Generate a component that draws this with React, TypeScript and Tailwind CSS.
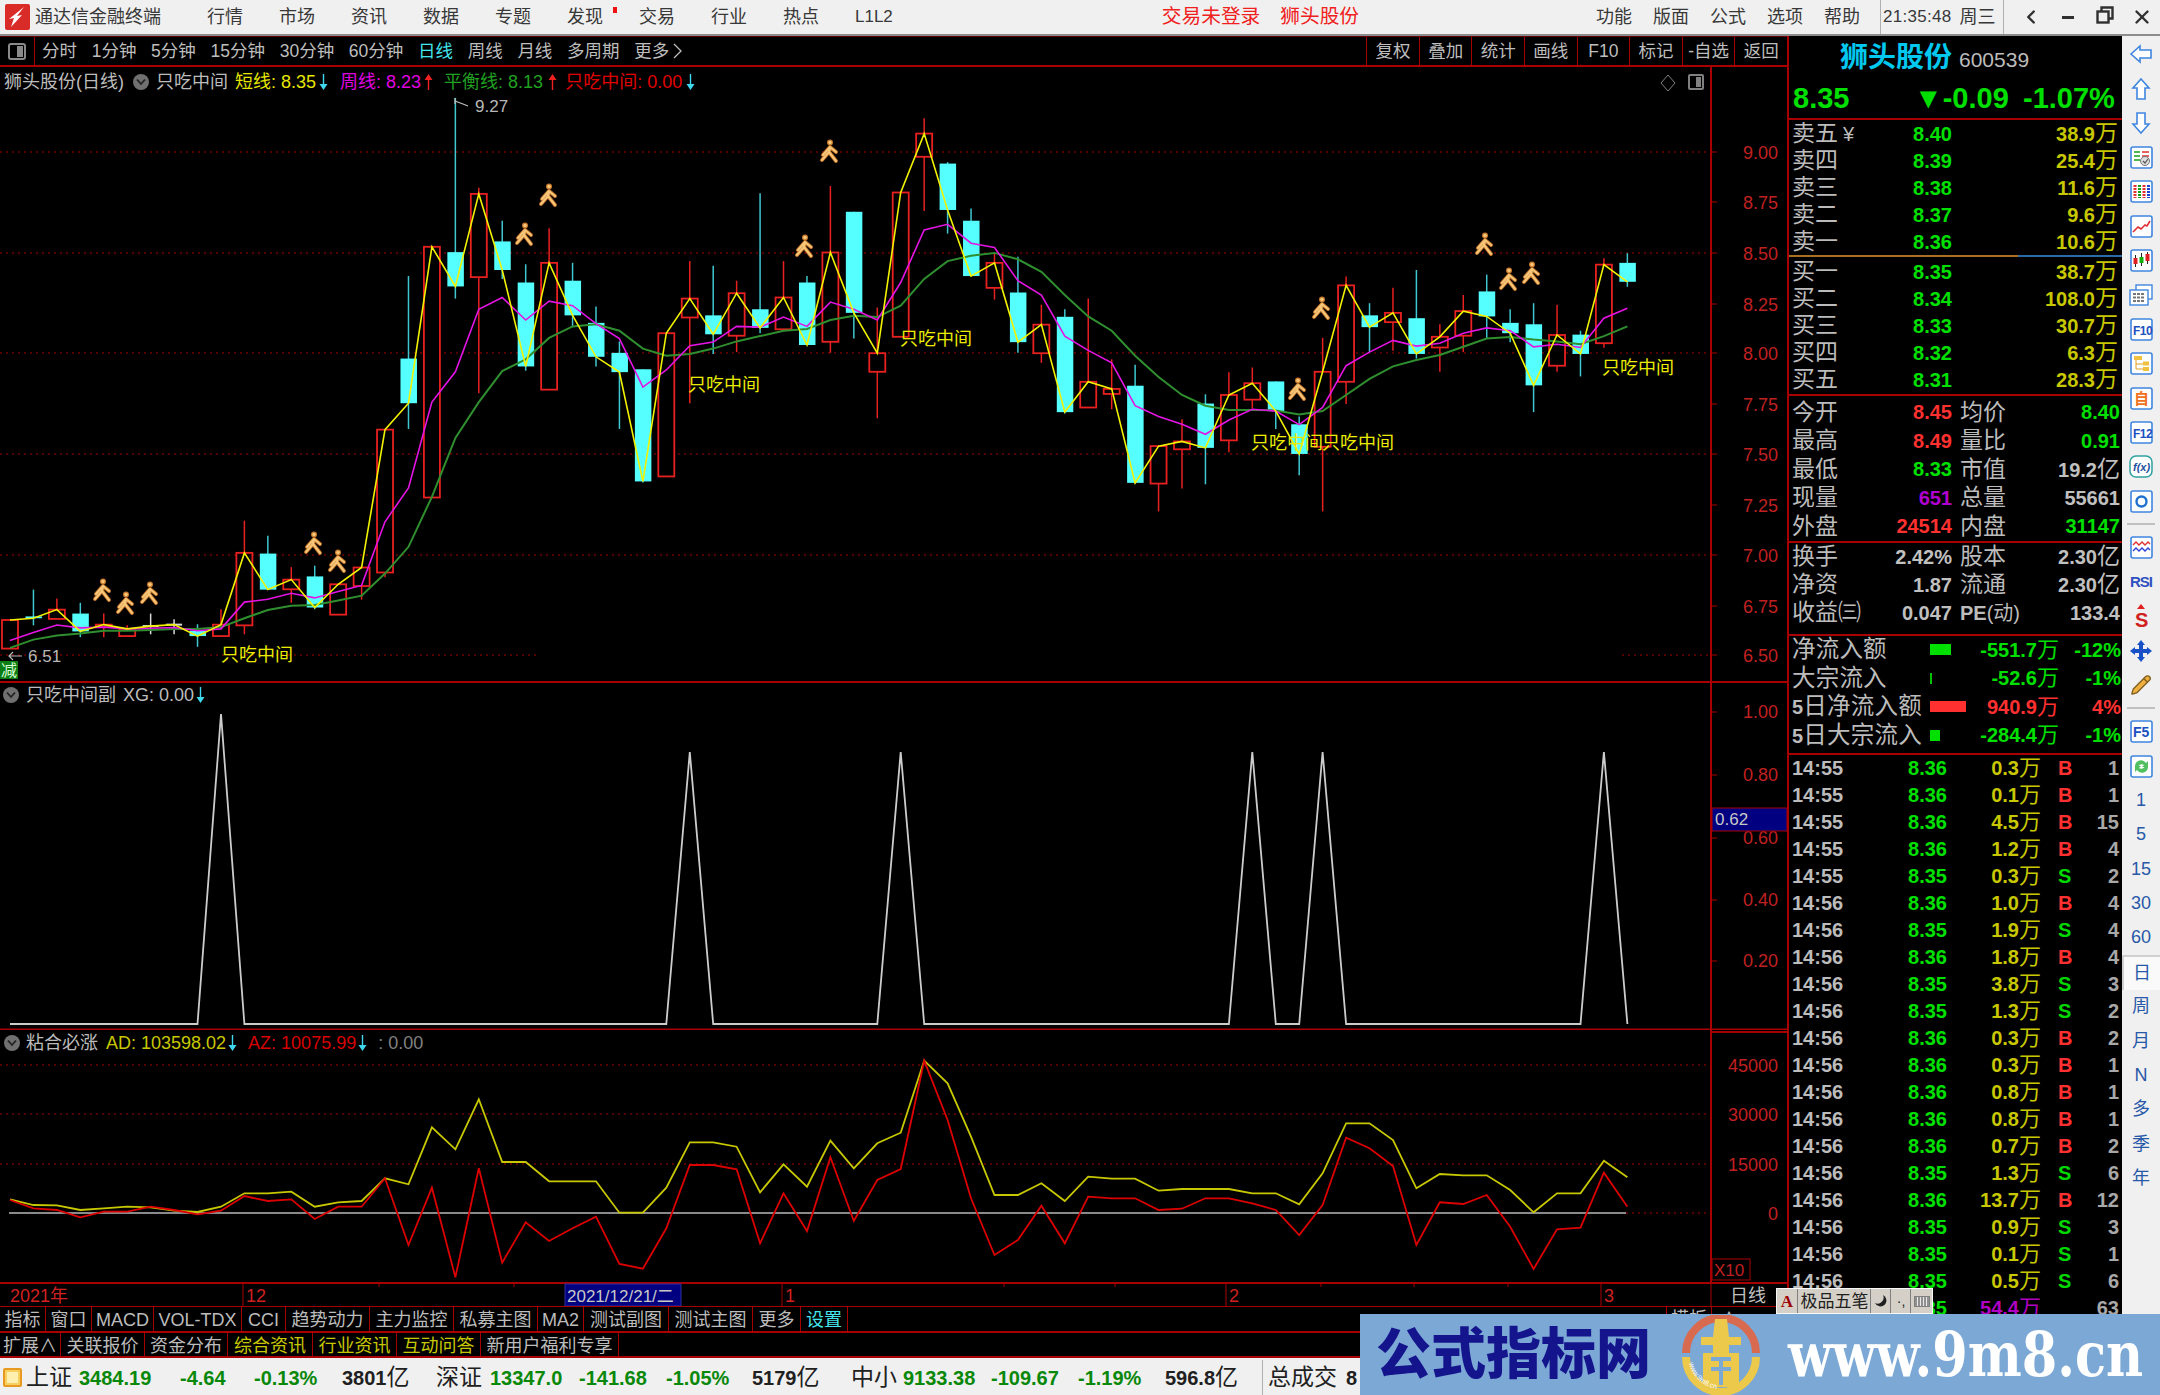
import React from 'react';
import { ChevronLeft, Pencil, X } from 'lucide-react';

// chart data was read in reference zoom coords, zy() maps it back to page pixels
const zy = (d: number) => 120 + d / 2.8;
const cx = (i: number) => 10 + 23.44 * i;

type Candle = [number, number, number, number, 'r' | 'c' | 'w'];

const candles: Candle[] = [
  [1400, 1400, 1480, 1480, 'r'], [1315, 1390, 1395, 1415, 'c'], [1340, 1371, 1397, 1397, 'r'], [1352, 1382, 1432, 1448, 'c'],
  [1382, 1413, 1420, 1448, 'r'], [1415, 1425, 1445, 1445, 'r'], [1382, 1417, 1420, 1440, 'w'], [1398, 1413, 1417, 1440, 'w'],
  [1412, 1430, 1445, 1475, 'c'], [1370, 1413, 1445, 1445, 'r'], [1122, 1212, 1415, 1440, 'r'], [1164, 1214, 1315, 1315, 'c'],
  [1252, 1287, 1314, 1352, 'r'], [1248, 1278, 1365, 1370, 'c'], [1300, 1300, 1385, 1385, 'r'], [1253, 1253, 1305, 1343, 'r'],
  [867, 867, 1267, 1280, 'r'], [437, 668, 793, 865, 'c'], [355, 355, 1057, 1057, 'r'], [-62, 370, 466, 500, 'c'],
  [190, 207, 440, 765, 'r'], [282, 340, 420, 445, 'c'], [404, 455, 690, 702, 'c'], [303, 400, 755, 755, 'r'],
  [400, 450, 547, 580, 'c'], [522, 568, 663, 690, 'c'], [620, 652, 706, 865, 'c'], [698, 698, 1012, 1015, 'c'],
  [597, 597, 998, 998, 'r'], [395, 500, 553, 793, 'r'], [408, 547, 600, 655, 'c'], [450, 485, 604, 650, 'r'],
  [205, 530, 582, 597, 'c'], [395, 497, 586, 586, 'r'], [437, 455, 630, 630, 'c'], [185, 371, 621, 652, 'r'],
  [257, 257, 540, 612, 'c'], [525, 653, 705, 835, 'r'], [203, 203, 607, 607, 'r'], [-5, 38, 103, 255, 'r'],
  [118, 122, 252, 318, 'c'], [248, 282, 437, 437, 'c'], [375, 400, 470, 503, 'r'], [383, 483, 622, 652, 'c'],
  [517, 573, 653, 680, 'r'], [530, 551, 818, 822, 'c'], [500, 733, 805, 805, 'r'], [670, 753, 767, 810, 'r'],
  [685, 744, 1016, 1018, 'c'], [913, 913, 1018, 1096, 'r'], [838, 900, 922, 1032, 'r'], [768, 794, 918, 1020, 'c'],
  [706, 770, 897, 930, 'r'], [693, 737, 783, 808, 'r'], [732, 732, 815, 865, 'c'], [830, 852, 935, 995, 'c'],
  [610, 705, 915, 1096, 'r'], [438, 463, 733, 795, 'r'], [513, 547, 580, 650, 'c'], [470, 540, 566, 646, 'r'],
  [420, 555, 655, 668, 'c'], [572, 607, 637, 705, 'r'], [490, 535, 604, 650, 'r'], [433, 480, 550, 613, 'c'],
  [530, 568, 597, 622, 'c'], [513, 572, 743, 818, 'c'], [517, 602, 688, 705, 'r'], [590, 601, 655, 718, 'c'],
  [387, 405, 625, 638, 'r'], [373, 400, 453, 467, 'c'],
];

const maLine = [
  1457, 1435, 1414, 1422, 1420, 1425, 1423, 1421, 1430, 1425, 1350, 1342, 1325, 1338, 1320, 1303, 1125, 1030, 790, 705,
  530, 497, 560, 507, 520, 570, 612, 748, 700, 632, 622, 578, 580, 552, 578, 510, 530, 560, 455, 308,
  292, 345, 357, 450, 490, 605, 645, 680, 800, 830, 852, 880, 840, 810, 815, 853, 805, 688, 650, 617,
  633, 625, 597, 582, 590, 635, 628, 637, 555, 527,
];

const balanceLine = [
  1478, 1455, 1443, 1438, 1430, 1430, 1428, 1425, 1425, 1420, 1395, 1372, 1360, 1358, 1345, 1332, 1270, 1195, 1055, 890,
  790, 703, 670, 610, 578, 572, 590, 640, 660, 655, 640, 620, 605, 590, 585, 560, 548, 552, 520, 445,
  395, 380, 372, 390, 425, 490, 550, 590, 660, 720, 770, 800, 812, 812, 813, 825, 815, 770, 725, 690,
  672, 658, 635, 612, 608, 615, 620, 628, 605, 578,
];

const adLine = [
  538, 555, 556, 570, 565, 560, 562, 572, 576, 560, 520, 520, 515, 560, 547, 543, 475, 493, 322, 388,
  238, 426, 426, 484, 484, 484, 578, 578, 503, 367, 367, 380, 517, 433, 500, 362, 445, 370, 338, 122,
  190, 350, 525, 525, 490, 543, 470, 476, 476, 512, 507, 507, 507, 520, 520, 553, 460, 310, 310, 360,
  505, 462, 466, 466, 510, 577, 520, 520, 422, 472,
];

const azLine = [
  540, 565, 570, 592, 575, 575, 560, 570, 583, 572, 528, 543, 538, 597, 560, 560, 475, 675, 503, 772,
  445, 728, 607, 663, 625, 590, 732, 746, 625, 435, 435, 448, 670, 520, 633, 412, 603, 480, 447, 122,
  300, 535, 705, 660, 557, 670, 530, 535, 535, 570, 566, 535, 535, 550, 570, 645, 555, 353, 385, 438,
  675, 547, 552, 525, 620, 747, 628, 623, 458, 560,
];

const runners: [number, number][] = [
  [103, 590], [126, 603], [150, 593], [314, 543], [338, 561], [525, 234], [549, 195], [805, 246], [830, 151],
  [1322, 308], [1298, 389], [1485, 244], [1509, 279], [1532, 273],
];

const signals: [number, number][] = [
  [221, 654], [688, 384], [900, 338], [1251, 442], [1322, 442], [1602, 367],
];

const mainGrid = [152, 253, 353, 454, 555];
const mainAxis: [string, number][] = [
  ['9.00', 152], ['8.75', 202], ['8.50', 253], ['8.25', 304], ['8.00', 353], ['7.75', 404],
  ['7.50', 454], ['7.25', 505], ['7.00', 555], ['6.75', 606], ['6.50', 655],
];

const pts = (ys: number[], map: (d: number) => number) => ys.map((d, i) => `${cx(i).toFixed(1)},${map(d).toFixed(1)}`).join(' ');

const runnerPath = 'M0 -4 L-1 1 M0 -4 L6 1 M0 -4 L-7 4 M-1 1 L-8 9 M-1 1 L6 10';

const Runner = ({ x, y }: { x: number; y: number }) => (
  <g transform={`translate(${x} ${y})`} fill="none" strokeLinecap="round" strokeLinejoin="round">
    <circle cx={0} cy={-8.5} r={3} fill="#c87a2c" />
    <path d={runnerPath} stroke="#b86c24" strokeWidth={4} />
    <circle cx={0} cy={-8.5} r={1.8} fill="#f8c678" />
    <path d={runnerPath} stroke="#f8c678" strokeWidth={2.2} />
  </g>
);

const MainChart = () => (
  <svg className="block" width={1787} height={616} viewBox="0 67 1787 616">
    {mainGrid.map((y) => (
      <line key={y} x1={0} x2={1711} y1={y} y2={y} stroke="#a80000" strokeDasharray="2 4" />
    ))}
    <line x1={0} x2={537} y1={655} y2={655} stroke="#a80000" strokeDasharray="2 4" />
    <line x1={1622} x2={1711} y1={655} y2={655} stroke="#a80000" strokeDasharray="2 4" />
    {candles.map(([h, t, b, l, kind], i) => {
      const x = cx(i);
      if (kind === 'w') {
        return (
          <g key={i} stroke="#d8d8d8" strokeWidth={1.5}>
            <line x1={x} x2={x} y1={zy(h)} y2={zy(l)} />
            <line x1={x - 8} x2={x + 8} y1={zy(t)} y2={zy(t)} strokeWidth={2} />
          </g>
        );
      }
      const stroke = kind === 'r' ? '#e82020' : '#3fc8d0';
      return (
        <g key={i}>
          <line x1={x} x2={x} y1={zy(h)} y2={zy(l)} stroke={stroke} strokeWidth={1.5} />
          {kind === 'r' ? (
            <rect x={x - 8} y={zy(t)} width={16} height={zy(b) - zy(t)} fill="#000" stroke={stroke} strokeWidth={1.8} />
          ) : (
            <rect x={x - 8} y={zy(t)} width={16.5} height={zy(b) - zy(t)} fill="#55ffff" />
          )}
        </g>
      );
    })}
    <polyline points={pts(balanceLine, zy)} fill="none" stroke="#2f8f2f" strokeWidth={2} />
    <polyline points={pts(maLine, zy)} fill="none" stroke="#e414e4" strokeWidth={1.6} />
    <polyline points={candles.map((c, i) => `${cx(i).toFixed(1)},${zy(c[4] === 'c' ? c[2] : c[1]).toFixed(1)}`).join(' ')} fill="none" stroke="#f2f200" strokeWidth={1.6} />
    {runners.map(([x, y]) => (
      <Runner key={`${x}-${y}`} x={x} y={y} />
    ))}
    {signals.map(([x, y]) => (
      <text key={x} x={x} y={y + 7} fontSize={18} fill="#ecec00">只吃中间</text>
    ))}
    <path d="M455 98 L455 104 M455 101 L463 104 L468 106" stroke="#c0c0c0" strokeWidth={1.2} fill="none" />
    <text x={475} y={112} fontSize={17} fill="#b8b8b8">9.27</text>
    <path d="M22 656 H9 M13 652 L9 656 L13 660" stroke="#b8b8b8" strokeWidth={1.2} fill="none" />
    <text x={28} y={662} fontSize={17} fill="#b8b8b8">6.51</text>
    <rect x={0} y={661} width={18} height={18} fill="#0b7d12" />
    <text x={1} y={676} fontSize={16} fill="#d8ffd8">减</text>
    <line x1={1711} x2={1711} y1={67} y2={683} stroke="#a80000" strokeWidth={2} />
    {mainAxis.map(([label, y]) => (
      <g key={label}>
        <line x1={1711} x2={1717} y1={y} y2={y} stroke="#a80000" />
        <text x={1778} y={y + 7} fontSize={18} textAnchor="end" fill="#c02020">{label}</text>
      </g>
    ))}
    <line x1={0} x2={1787} y1={682} y2={682} stroke="#a80000" strokeWidth={2} />
  </svg>
);

const peakLine = () => {
  const tall = [9];
  const peaks = [9, 29, 38, 53, 56, 68];
  const out: string[] = [];
  for (let i = 0; i < 70; i++) {
    const base = 1024;
    const y = peaks.includes(i) ? (tall.includes(i) ? 714 : 752) : base;
    out.push(`${cx(i).toFixed(1)},${y}`);
  }
  return out.join(' ');
};

const subAxis: [string, number][] = [['1.00', 712], ['0.80', 775], ['0.60', 838], ['0.40', 900], ['0.20', 961]];

const SignalChart = () => (
  <svg className="block" width={1787} height={347} viewBox="0 683 1787 347">
    <polyline points={peakLine()} fill="none" stroke="#cccccc" strokeWidth={1.8} />
    <line x1={1711} x2={1711} y1={683} y2={1030} stroke="#a80000" strokeWidth={2} />
    {subAxis.map(([label, y]) => (
      <g key={label}>
        <line x1={1711} x2={1717} y1={y} y2={y} stroke="#a80000" />
        <text x={1778} y={y + 6} fontSize={18} textAnchor="end" fill="#c02020">{label}</text>
      </g>
    ))}
    <rect x={1712} y={808} width={75} height={23} fill="#000080" stroke="#a80000" />
    <text x={1715} y={825} fontSize={17} fill="#c8c8c8">0.62</text>
    <line x1={0} x2={1787} y1={1029.5} y2={1029.5} stroke="#a80000" strokeWidth={2} />
  </svg>
);

const flowY = (d: number) => 1020 + d / 3;
const flowAxis: [string, number][] = [['45000', 1065], ['30000', 1114], ['15000', 1164], ['0', 1213]];

const FlowChart = () => (
  <svg className="block" width={1787} height={252} viewBox="0 1030 1787 252">
    {[1065, 1114, 1164].map((y) => (
      <line key={y} x1={0} x2={1711} y1={y} y2={y} stroke="#a80000" strokeDasharray="2 4" />
    ))}
    <line x1={1626} x2={1711} y1={1213} y2={1213} stroke="#a80000" strokeDasharray="2 4" />
    <line x1={9} x2={1626} y1={1213} y2={1213} stroke="#8a8a8a" strokeWidth={2} />
    <polyline points={pts(adLine, flowY)} fill="none" stroke="#c8c800" strokeWidth={1.8} />
    <polyline points={pts(azLine, flowY)} fill="none" stroke="#dc0000" strokeWidth={1.8} />
    <line x1={1711} x2={1711} y1={1030} y2={1282} stroke="#a80000" strokeWidth={2} />
    <line x1={1711} x2={1787} y1={1032} y2={1032} stroke="#a80000" strokeWidth={2} />
    {flowAxis.map(([label, y]) => (
      <text key={label} x={1778} y={y + 7} fontSize={18} textAnchor="end" fill="#c02020">{label}</text>
    ))}
    <rect x={1712} y={1259} width={38} height={21} fill="none" stroke="#a80000" />
    <text x={1714} y={1276} fontSize={17} fill="#c02020">X10</text>
  </svg>
);

const dateTicks = [379, 514, 1004, 1115, 1321, 1414, 1508];

const DateAxis = () => (
  <svg className="block" width={1787} height={24} viewBox="0 1282 1787 24">
    <line x1={0} x2={1787} y1={1283} y2={1283} stroke="#a80000" strokeWidth={2} />
    {dateTicks.map((x) => (
      <line key={x} x1={x} x2={x} y1={1283} y2={1287} stroke="#a80000" />
    ))}
    {[243, 782, 1226, 1601, 1711].map((x) => (
      <line key={x} x1={x} x2={x} y1={1283} y2={1306} stroke="#a80000" />
    ))}
    <text x={10} y={1302} fontSize={18} fill="#d02020">2021年</text>
    <text x={246} y={1302} fontSize={18} fill="#d02020">12</text>
    <rect x={565} y={1284} width={116} height={22} fill="#000080" stroke="#3030a0" />
    <text x={567} y={1302} fontSize={17} fill="#c8c8c8">2021/12/21/二</text>
    <text x={785} y={1302} fontSize={18} fill="#d02020">1</text>
    <text x={1229} y={1302} fontSize={18} fill="#d02020">2</text>
    <text x={1604} y={1302} fontSize={18} fill="#d02020">3</text>
    <text x={1730} y={1302} fontSize={18} fill="#c0c0c0">日线</text>
  </svg>
);

const Drop = () => (
  <span className="flex h-[16px] w-[16px] items-center justify-center rounded-full bg-[#707070]">
    <svg width={10} height={8} viewBox="0 0 10 8"><path d="M1 1.5 L5 6 L9 1.5" fill="none" stroke="#222" strokeWidth={1.8} /></svg>
  </span>
);

const Arrow = ({ up }: { up?: boolean }) => (
  <svg width={9} height={18} viewBox="0 0 9 18" className="shrink-0">
    {up ? (
      <path d="M4.5 1 L8.5 7 L5.2 7 L5.2 17 L3.8 17 L3.8 7 L0.5 7 Z" fill="#f02020" />
    ) : (
      <path d="M4.5 17 L8.5 11 L5.2 11 L5.2 1 L3.8 1 L3.8 11 L0.5 11 Z" fill="#3fd8ee" />
    )}
  </svg>
);

const TopBar = () => (
  <div className="flex h-[36px] shrink-0 items-center border-b-2 border-[#8c8c8c] bg-[#f0f0f0] text-[18px] text-[#383838]">
    <svg className="ml-[5px] shrink-0" width={25} height={26} viewBox="0 0 25 26">
      <rect x={0} y={0} width={25} height={26} rx={2} fill="#d92b28" />
      <path d="M19 3 L12 12 L17 11 L6 23 L9 14 L4 15 Z" fill="#fff" />
    </svg>
    <span className="ml-[5px]">通达信金融终端</span>
    <div className="ml-[46px] flex gap-[36px]">
      <span>行情</span>
      <span>市场</span>
      <span>资讯</span>
      <span>数据</span>
      <span>专题</span>
      <span className="relative">
        发现
        <span className="absolute left-[46px] top-[3px] h-[6px] w-[4px] bg-[#f01010]" />
      </span>
      <span>交易</span>
      <span>行业</span>
      <span>热点</span>
      <span className="text-[17px]">L1L2</span>
    </div>
    <span className="ml-[269px] text-[19.7px] text-[#f02020]">交易未登录</span>
    <span className="ml-[20px] text-[19.7px] text-[#f02020]">狮头股份</span>
    <div className="ml-auto flex h-full items-center">
      <div className="flex gap-[21px] pr-[20px]">
        <span>功能</span>
        <span>版面</span>
        <span>公式</span>
        <span>选项</span>
        <span>帮助</span>
      </div>
      <div className="flex h-full w-[124px] items-center gap-[8px] border-x border-[#b0b0b0] pl-[2px]">
        <span className="text-[17px] tracking-[0.3px]">21:35:48</span>
        <span>周三</span>
      </div>
      <div className="ml-[8px] flex text-[#303030]">
        <span className="flex w-[37px] justify-center"><ChevronLeft size={22} strokeWidth={2.6} /></span>
        <span className="flex w-[37px] items-center justify-center"><span className="h-[3px] w-[12px] bg-[#303030]" /></span>
        <span className="flex w-[37px] justify-center">
          <svg width={18} height={18} viewBox="0 0 18 18" fill="none" stroke="#303030" strokeWidth={2.4}>
            <rect x={1.5} y={5.5} width={11} height={11} />
            <path d="M5.5 5 V1.5 H16.5 V12.5 H13" />
          </svg>
        </span>
        <span className="flex w-[37px] justify-center"><X size={22} strokeWidth={2.6} /></span>
      </div>
    </div>
  </div>
);

const periods = ['分时', '1分钟', '5分钟', '15分钟', '30分钟', '60分钟'];
const afterPeriods = ['周线', '月线', '多周期'];
const toolButtons = ['复权', '叠加', '统计', '画线', 'F10', '标记', '-自选', '返回'];

const Toolbar = () => (
  <div className="flex h-[31px] shrink-0 items-center border-b-2 border-t border-b-[#a80000] border-t-[#600000] text-[17.5px] text-[#bdbdbd]">
    <div className="flex h-full w-[35px] items-center justify-center border-r border-[#a80000]">
      <span className="flex h-[17px] w-[18px] justify-end rounded-[3px] border-2 border-[#8a8a8a] p-[1px]">
        <span className="h-full w-[6px] bg-[#8a8a8a]" />
      </span>
    </div>
    <div className="ml-[7px] flex items-center gap-[14.7px]">
      {periods.map((p) => (
        <span key={p}>{p}</span>
      ))}
      <span className="text-[#44e4ec]">日线</span>
      {afterPeriods.map((p) => (
        <span key={p}>{p}</span>
      ))}
      <span className="flex items-center gap-[4px]">
        更多
        <svg width={9} height={16} viewBox="0 0 9 16"><path d="M1 1 L8 8 L1 15" fill="none" stroke="#bdbdbd" strokeWidth={1.3} /></svg>
      </span>
    </div>
    <div className="ml-auto flex h-full">
      {toolButtons.map((b) => (
        <span key={b} className="flex h-full w-[52.6px] items-center justify-center border-l border-[#a80000]">{b}</span>
      ))}
    </div>
  </div>
);

const Legend = ({ children, className }: { children: React.ReactNode; className: string }) => (
  <div className={`absolute left-0 flex h-[24px] items-center whitespace-nowrap text-[18px] leading-none text-[#bcbcbc] ${className}`}>
    {children}
  </div>
);

const firstTabs: [string, string][] = [
  ['指标', 'w-[46px]'], ['窗口', 'w-[46px]'], ['MACD', 'w-[62px]'], ['VOL-TDX', 'w-[88px]'], ['CCI', 'w-[44px]'], ['趋势动力', 'w-[84px]'],
  ['主力监控', 'w-[84px]'], ['私募主图', 'w-[84px]'], ['MA2', 'w-[46px]'], ['测试副图', 'w-[85px]'], ['测试主图', 'w-[84px]'], ['更多', 'w-[48px]'],
];

const secondTabs: [string, string, string][] = [
  ['扩展∧', 'w-[61px]', 'text-[#bcbcbc]'], ['关联报价', 'w-[84px]', 'text-[#bcbcbc]'], ['资金分布', 'w-[83px]', 'text-[#bcbcbc]'],
  ['综合资讯', 'w-[85px]', 'text-[#c8c800]'], ['行业资讯', 'w-[84px]', 'text-[#c8c800]'], ['互动问答', 'w-[84px]', 'text-[#c8c800]'],
  ['新用户福利专享', 'w-[138px]', 'text-[#bcbcbc]'],
];

const TabRows = () => (
  <>
    <div className="flex h-[25px] shrink-0 items-center border-t border-[#a80000] text-[18px] leading-none text-[#bcbcbc]">
      {firstTabs.map(([label, w]) => (
        <span key={label} className={`flex h-full items-center justify-center border-r border-[#a80000] pt-[2px] ${w}`}>{label}</span>
      ))}
      <span className="flex h-full w-[47px] items-center justify-center border-r border-[#a80000] pt-[2px] text-[#44e4ec]">设置</span>
      <span className="ml-auto flex h-full w-[45px] items-center justify-center border-l border-[#a80000]">模板</span>
      <span className="flex h-full w-[76px] items-center border-l border-[#a80000] pl-[8px]">∧</span>
    </div>
    <div className="flex h-[27px] shrink-0 items-center border-y-2 border-[#a80000] text-[18px] leading-none">
      {secondTabs.map(([label, w, color]) => (
        <span key={label} className={`flex h-full items-center justify-center border-r border-[#a80000] pt-[3px] ${w} ${color}`}>{label}</span>
      ))}
    </div>
  </>
);

const asks: [string, string, string][] = [
  ['卖五', '8.40', '38.9'], ['卖四', '8.39', '25.4'], ['卖三', '8.38', '11.6'], ['卖二', '8.37', '9.6'], ['卖一', '8.36', '10.6'],
];
const bids: [string, string, string][] = [
  ['买一', '8.35', '38.7'], ['买二', '8.34', '108.0'], ['买三', '8.33', '30.7'], ['买四', '8.32', '6.3'], ['买五', '8.31', '28.3'],
];

const QuoteRow = ({ label, price, vol }: { label: string; price: string; vol: string }) => (
  <div className="flex h-[27px] items-center pl-[3px] pr-[4px] leading-none">
    <span className="w-[72px] text-[23px] text-[#bcbcbc]">
      {label}
      {label === '卖五' && <span className="ml-[5px] text-[20px]">¥</span>}
    </span>
    <span className="w-[88px] text-right text-[20px] font-bold text-[#00e000]">{price}</span>
    <span className="ml-auto text-[20px] font-bold text-[#c8c800]">
      {vol}
      <span className="text-[23px] font-normal">万</span>
    </span>
  </div>
);

type Stat = [string, string, string, string, string, string];

const statsA: Stat[] = [
  ['今开', '8.45', 'text-[#ff3030]', '均价', '8.40', 'text-[#00e000]'],
  ['最高', '8.49', 'text-[#ff3030]', '量比', '0.91', 'text-[#00e000]'],
  ['最低', '8.33', 'text-[#00e000]', '市值', '19.2亿', 'text-[#c0c0c0]'],
  ['现量', '651', 'text-[#b000d0]', '总量', '55661', 'text-[#c0c0c0]'],
  ['外盘', '24514', 'text-[#ff3030]', '内盘', '31147', 'text-[#00e000]'],
];

const statsB: Stat[] = [
  ['换手', '2.42%', 'text-[#c0c0c0]', '股本', '2.30亿', 'text-[#c0c0c0]'],
  ['净资', '1.87', 'text-[#c0c0c0]', '流通', '2.30亿', 'text-[#c0c0c0]'],
  ['收益㈢', '0.047', 'text-[#c0c0c0]', 'PE(动)', '133.4', 'text-[#c0c0c0]'],
];

const Money = ({ text }: { text: string }) => {
  const m = text.match(/^(.*)([亿万])$/);
  if (!m) return <>{text}</>;
  return (
    <>
      {m[1]}
      <span className="text-[23px] font-normal">{m[2]}</span>
    </>
  );
};

const StatRow = ({ row, h }: { row: Stat; h: string }) => (
  <div className={`flex items-center leading-none ${h}`}>
    <div className="flex w-[163px] items-center justify-between pl-[3px]">
      <span className="text-[23px] text-[#bcbcbc]">{row[0]}</span>
      <span className={`text-[20px] font-bold ${row[2]}`}>{row[1]}</span>
    </div>
    <div className="ml-[8px] flex w-[160px] items-center justify-between">
      {row[3].startsWith('PE') ? (
        <span className="text-[20px] text-[#bcbcbc]"><span className="font-bold">PE</span>(动)</span>
      ) : (
        <span className="text-[23px] text-[#bcbcbc]">{row[3]}</span>
      )}
      <span className={`text-[20px] font-bold ${row[5]}`}><Money text={row[4]} /></span>
    </div>
  </div>
);

const flows = [
  { label: '净流入额', bar: 'w-[21px] bg-[#00e000]', value: '-551.7', pct: '-12%', color: 'text-[#00e000]' },
  { label: '大宗流入', bar: 'w-[2px] bg-[#00c000]', value: '-52.6', pct: '-1%', color: 'text-[#00e000]' },
  { label: '5日净流入额', bar: 'w-[36px] bg-[#ff3030]', value: '940.9', pct: '4%', color: 'text-[#ff3030]' },
  { label: '5日大宗流入', bar: 'w-[10px] bg-[#00e000]', value: '-284.4', pct: '-1%', color: 'text-[#00e000]' },
];

const ticks: [string, string, string, string, number][] = [
  ['14:55', '8.36', '0.3', 'B', 1], ['14:55', '8.36', '0.1', 'B', 1], ['14:55', '8.36', '4.5', 'B', 15], ['14:55', '8.36', '1.2', 'B', 4],
  ['14:55', '8.35', '0.3', 'S', 2], ['14:56', '8.36', '1.0', 'B', 4], ['14:56', '8.35', '1.9', 'S', 4], ['14:56', '8.36', '1.8', 'B', 4],
  ['14:56', '8.35', '3.8', 'S', 3], ['14:56', '8.35', '1.3', 'S', 2], ['14:56', '8.36', '0.3', 'B', 2], ['14:56', '8.36', '0.3', 'B', 1],
  ['14:56', '8.36', '0.8', 'B', 1], ['14:56', '8.36', '0.8', 'B', 1], ['14:56', '8.36', '0.7', 'B', 2], ['14:56', '8.35', '1.3', 'S', 6],
  ['14:56', '8.36', '13.7', 'B', 12], ['14:56', '8.35', '0.9', 'S', 3], ['14:56', '8.35', '0.1', 'S', 1], ['14:56', '8.35', '0.5', 'S', 6],
  ['15:00', '8.35', '54.4', '', 63],
];

const QuotePanel = () => (
  <div className="flex w-[335px] shrink-0 flex-col border-l-2 border-[#a80000]">
    <div className="h-[84px] shrink-0 border-b-2 border-[#a80000]">
      <div className="flex h-[36px] items-end pl-[51px] leading-none">
        <span className="text-[28px] font-bold text-[#00c8ee]">狮头股份</span>
        <span className="mb-[2px] ml-[7px] text-[21px] text-[#bcbcbc]">600539</span>
      </div>
      <div className="mt-[11px] flex h-[30px] items-center pl-[4px] text-[29px] font-bold leading-none text-[#00e000]">
        <span className="w-[121px]">8.35</span>
        <span className="w-[109px]">▼-0.09</span>
        <span>-1.07%</span>
      </div>
    </div>
    {asks.map(([l, p, v]) => (
      <QuoteRow key={l} label={l} price={p} vol={v} />
    ))}
    <div className="flex h-[2px] shrink-0">
      <span className="w-[229px] bg-[#a87020]" />
      <span className="flex-1 bg-[#2a6aa8]" />
    </div>
    <div className="mt-[1px]">
      {bids.map(([l, p, v]) => (
        <QuoteRow key={l} label={l} price={p} vol={v} />
      ))}
    </div>
    <div className="mt-[1px] h-[2px] shrink-0 bg-[#a80000]" />
    <div className="pt-[2px]">
      {statsA.map((r) => (
        <StatRow key={r[0]} row={r} h="h-[28.5px]" />
      ))}
    </div>
    <div className="h-[2px] shrink-0 bg-[#a80000]" />
    {statsB.map((r) => (
      <StatRow key={r[0]} row={r} h="h-[28px]" />
    ))}
    <div className="mt-[7px] h-[2px] shrink-0 bg-[#a80000]" />
    {flows.map((f) => (
      <div key={f.label} className="flex h-[28.5px] items-center pl-[3px] leading-none">
        <span className="w-[138px] text-[23.5px] tracking-[0.2px] text-[#bcbcbc]">
          {f.label.startsWith('5') ? (
            <>
              <span className="text-[20px] font-bold">5</span>
              {f.label.slice(1)}
            </>
          ) : f.label}
        </span>
        <span className="w-[48px]"><span className={`block h-[11px] ${f.bar}`} /></span>
        <span className={`w-[81px] text-right text-[20px] font-bold ${f.color}`}>
          {f.value}
          <span className="text-[22px] font-normal">万</span>
        </span>
        <span className={`w-[62px] text-right text-[20px] font-bold ${f.color}`}>{f.pct}</span>
      </div>
    ))}
    <div className="mt-[3px] h-[2px] shrink-0 bg-[#a80000]" />
    <div className="flex-1 overflow-hidden">
      {ticks.map(([time, price, vol, side, count], i) => (
        <div key={i} className="flex h-[27px] items-center pl-[3px] text-[20px] font-bold leading-none">
          <span className="w-[85px] text-[#bcbcbc]">{time}</span>
          <span className="w-[70px] text-right text-[#00e000]">{price}</span>
          <span className={`w-[94px] text-right ${side ? 'text-[#c8c800]' : 'text-[#b000c0]'}`}>
            {vol}
            <span className="text-[22px] font-normal">万</span>
          </span>
          <span className={`ml-[17px] w-[20px] ${side === 'B' ? 'text-[#ff3030]' : 'text-[#00d800]'}`}>{side}</span>
          <span className="w-[41px] text-right text-[#a8a8a8]">{count}</span>
        </div>
      ))}
    </div>
  </div>
);

const Box = ({ children }: { children: React.ReactNode }) => (
  <svg width={23} height={23} viewBox="0 0 23 23">
    <rect x={1} y={1} width={21} height={21} rx={2} fill="#fff" stroke="#3f86e0" strokeWidth={1.6} />
    {children}
  </svg>
);

const OutlineArrow = ({ d }: { d: string }) => (
  <svg width={24} height={24} viewBox="0 0 24 24">
    <path d={d} fill="#fff" stroke="#3f86e0" strokeWidth={1.6} />
  </svg>
);

const Cell = ({ children, sel }: { children: React.ReactNode; sel?: boolean }) => (
  <div className={`flex h-[34.4px] shrink-0 items-center justify-center text-[18px] text-[#2858a8] ${sel ? 'border-2 border-r-0 border-b-0 border-[#d0d0d0] bg-[#fafafa]' : ''}`}>
    {children}
  </div>
);

const Sep = () => (
  <div className="flex h-[12px] shrink-0 items-center px-[5px]"><span className="h-[2px] w-full bg-[#c0c0c0]" /></div>
);

const SideBar = () => (
  <div className="flex w-[38px] shrink-0 flex-col bg-[#f0f0f0] pt-[1px]">
    <Cell><OutlineArrow d="M2 12 L11 4 V8 H22 V16 H11 V20 Z" /></Cell>
    <Cell><OutlineArrow d="M12 2 L20 11 H16 V22 H8 V11 H4 Z" /></Cell>
    <Cell><OutlineArrow d="M12 22 L20 13 H16 V2 H8 V13 H4 Z" /></Cell>
    <Cell>
      <Box>
        <path d="M4 6 H10 M4 10 H10 M4 14 H10" stroke="#15a015" strokeWidth={1.6} />
        <path d="M12 6 H19 M12 10 H19" stroke="#e03030" strokeWidth={1.6} />
        <circle cx={15} cy={15} r={4.5} fill="#ddd" stroke="#777" />
        <path d="M13 15 L15 17 L18 13" fill="none" stroke="#555" strokeWidth={1.2} />
      </Box>
    </Cell>
    <Cell>
      <Box>
        <path d="M5 5 V18" stroke="#e03030" strokeWidth={3} strokeDasharray="2 1" />
        <path d="M9.5 5 V18" stroke="#15a015" strokeWidth={3} strokeDasharray="2 1" />
        <path d="M14 5 V18" stroke="#e03030" strokeWidth={3} strokeDasharray="2 1" />
        <path d="M18.5 5 V18" stroke="#2040d0" strokeWidth={3} strokeDasharray="2 1" />
      </Box>
    </Cell>
    <Cell>
      <Box><path d="M3 17 L8 12 L11 14 L15 10 L17 11 L20 6" fill="none" stroke="#e03030" strokeWidth={1.6} /></Box>
    </Cell>
    <Cell>
      <Box>
        <path d="M5.5 6 V18 M11.5 4 V17 M17.5 3 V15" stroke="#222" />
        <rect x={3.5} y={9} width={4} height={6} fill="#e02020" />
        <rect x={9.5} y={8} width={4} height={6} fill="#10b010" />
        <rect x={15.5} y={5} width={4} height={7} fill="#e02020" />
      </Box>
    </Cell>
    <Cell>
      <svg width={24} height={22} viewBox="0 0 24 22">
        <rect x={7} y={1} width={16} height={14} fill="#fff" stroke="#3f86e0" strokeWidth={1.4} />
        <rect x={1} y={6} width={18} height={15} fill="#fff" stroke="#3f86e0" strokeWidth={1.4} />
        <path d="M4 10 H16 M4 13.5 H16 M4 17 H16" stroke="#777" strokeWidth={2} strokeDasharray="3 1" />
      </svg>
    </Cell>
    <Cell><Box><text x={3} y={16.5} fontSize={12} fontWeight={700} letterSpacing={-0.5} fill="#2050c0">F10</text></Box></Cell>
    <Cell>
      <Box>
        <path d="M6 8 V17 H14 M6 12 H14" fill="none" stroke="#e0a020" />
        <rect x={4} y={4} width={8} height={4} fill="#f0c040" />
        <rect x={13} y={9.5} width={6} height={4} fill="#f0c040" />
        <rect x={13} y={15} width={6} height={4} fill="#f0c040" />
      </Box>
    </Cell>
    <Cell><Box><text x={4} y={17} fontSize={15} fontWeight={700} fill="#f07020">自</text></Box></Cell>
    <Cell><Box><text x={3} y={16.5} fontSize={12} fontWeight={700} letterSpacing={-0.5} fill="#2050c0">F12</text></Box></Cell>
    <Cell>
      <svg width={24} height={23} viewBox="0 0 24 23">
        <rect x={1} y={1} width={22} height={21} rx={6} fill="#fff" stroke="#30a0a0" strokeWidth={1.5} />
        <text x={4} y={16} fontSize={11} fontStyle="italic" fontWeight={700} fill="#2050a0">f(x)</text>
      </svg>
    </Cell>
    <Cell>
      <Box><circle cx={11.5} cy={11.5} r={5} fill="#fff" stroke="#2070d0" strokeWidth={2.4} /></Box>
    </Cell>
    <Sep />
    <Cell>
      <Box>
        <path d="M3 9 L6 6 L9 9 L12 6 L15 9 L18 6 L20 8" fill="none" stroke="#e03030" strokeWidth={1.4} />
        <path d="M3 15 L6 12 L9 15 L12 12 L15 15 L18 12 L20 14" fill="none" stroke="#3040d0" strokeWidth={1.4} />
      </Box>
    </Cell>
    <Cell><span className="text-[15px] font-bold tracking-[-1px] text-[#3050c0]">RSI</span></Cell>
    <Cell>
      <svg width={22} height={26} viewBox="0 0 22 26">
        <path d="M11 1 L15 6 H7 Z" fill="#e02020" />
        <text x={5} y={24} fontSize={20} fontWeight={700} fill="#d02020">S</text>
      </svg>
    </Cell>
    <Cell>
      <svg width={24} height={24} viewBox="0 0 24 24" fill="#1850c8">
        <path d="M12 1 L16 6 H14 V10 H18 V8 L23 12 L18 16 V14 H14 V18 H16 L12 23 L8 18 H10 V14 H6 V16 L1 12 L6 8 V10 H10 V6 H8 Z" />
      </svg>
    </Cell>
    <Cell><Pencil size={22} fill="#f0b040" stroke="#806020" strokeWidth={1.5} /></Cell>
    <Sep />
    <Cell><Box><text x={3} y={17} fontSize={14} fontWeight={700} fill="#2050c0">F5</text></Box></Cell>
    <Cell>
      <Box>
        <path d="M5 11 A6 6 0 0 1 16 8 L18 6 V12 H12 L14 10 A4 4 0 0 0 8 12 Z" fill="#50c060" />
        <path d="M18 12 A6 6 0 0 1 7 15 L5 17 V11 H11 L9 13 A4 4 0 0 0 15 11 Z" fill="#50c060" />
      </Box>
    </Cell>
    <Cell>1</Cell>
    <Cell>5</Cell>
    <Cell>15</Cell>
    <Cell>30</Cell>
    <Cell>60</Cell>
    <Cell sel>日</Cell>
    <Cell>周</Cell>
    <Cell>月</Cell>
    <Cell>N</Cell>
    <Cell>多</Cell>
    <Cell>季</Cell>
    <Cell>年</Cell>
  </div>
);

const statusCells: [string, string, string][] = [
  ['上证', 'w-[53px]', 'text-[23px] text-[#202020]'],
  ['3484.19', 'w-[101px]', 'text-[#0a880a]'],
  ['-4.64', 'w-[74px]', 'text-[#0a880a]'],
  ['-0.13%', 'w-[88px]', 'text-[#0a880a]'],
  ['3801亿', 'w-[94px]', 'text-[#202020]'],
  ['深证', 'w-[54px]', 'text-[23px] text-[#202020]'],
  ['13347.0', 'w-[89px]', 'text-[#0a880a]'],
  ['-141.68', 'w-[87px]', 'text-[#0a880a]'],
  ['-1.05%', 'w-[86px]', 'text-[#0a880a]'],
  ['5179亿', 'w-[99px]', 'text-[#202020]'],
  ['中小', 'w-[52px]', 'text-[23px] text-[#202020]'],
  ['9133.38', 'w-[88px]', 'text-[#0a880a]'],
  ['-109.67', 'w-[87px]', 'text-[#0a880a]'],
  ['-1.19%', 'w-[87px]', 'text-[#0a880a]'],
  ['596.8亿', 'w-[97px]', 'text-[#202020]'],
];

const StatusBar = () => (
  <div className="flex h-[37px] shrink-0 items-center bg-[#f0f0f0] pl-[3px] pt-[2px] text-[20px] font-bold leading-none">
    <span className="mr-[4px] h-[19px] w-[19px] shrink-0 rounded-[2px] border-2 border-[#e89a20] bg-[#f8d060] p-[2px]">
      <span className="block h-full w-full bg-[#fff0b0]" />
    </span>
    {statusCells.map(([text, w, cls]) => (
      <span key={text} className={`shrink-0 whitespace-nowrap ${w} ${cls} ${text.length === 2 ? 'font-normal' : ''}`}>
        <Money text={text} />
      </span>
    ))}
    <span className="flex h-full items-center whitespace-nowrap border-l border-[#b0b0b0] pl-[5px]">
      <span className="text-[23px] font-normal text-[#202020]">总成交</span>
      <span className="ml-[9px] text-[#202020]">8</span>
    </span>
  </div>
);

const Banner = () => (
  <div className="absolute bottom-0 right-0 flex h-[81px] w-[800px] items-center bg-[#7ca8d6]">
    <span className="ml-[16px] text-[55px] font-black leading-none text-[#14148c]">公式指标网</span>
    <svg className="ml-[30px] shrink-0" width={80} height={80} viewBox="0 0 80 80">
      <path d="M5 38 A35 35 0 0 1 75 38" fill="none" stroke="#d86a50" strokeWidth={8} />
      <path d="M5 42 A35 35 0 0 0 75 42" fill="none" stroke="#ecc94a" strokeWidth={8} />
      <path d="M34 4 H46 L48 22 H60 V30 H48 V38 H58 V72 H22 V38 H32 V30 H20 V22 H32 Z" fill="#ecc94a" />
      <path d="M30 44 H50 M30 54 H50 M40 44 V70" stroke="#7ca8d6" strokeWidth={4} />
      <path id="logo-arc" d="M8 48 A33 33 0 0 0 40 74" fill="none" />
      <text fontSize={7} fill="#fff"><textPath href="#logo-arc">www.9m8.cn</textPath></text>
    </svg>
    <span className="ml-[27px] scale-y-120 whitespace-nowrap text-[51px] font-bold leading-none tracking-[0px] text-white [font-family:'DejaVu_Serif',serif]">www.9m8.cn</span>
  </div>
);

const ImeBar = () => (
  <div className="absolute left-[1776px] top-[1288px] flex h-[26px] items-stretch gap-[1px] border border-[#f8f8f8] bg-[#d4d0c8] text-[17px] leading-none text-[#202020]">
    <span className="flex w-[21px] items-center justify-center border-r border-[#808080] font-bold text-[#a00000] [font-family:'Liberation_Serif',serif]">A</span>
    <span className="flex w-[72px] items-center justify-center whitespace-nowrap border-r border-[#808080]">极品五笔</span>
    <span className="flex w-[19px] items-center justify-center border-r border-[#808080]">
      <svg width={14} height={14} viewBox="0 0 14 14"><path d="M9 1 A6 6 0 1 1 1 9 A6 6 0 0 0 9 1 Z" fill="#202020" /></svg>
    </span>
    <span className="flex w-[19px] items-center justify-center border-r border-[#808080] text-[14px]">·,</span>
    <span className="flex w-[20px] items-center justify-center">
      <span className="h-[11px] w-[16px] border border-[#808080] bg-[repeating-linear-gradient(90deg,#909090_0_2px,#e8e8e8_2px_3px)]" />
    </span>
  </div>
);

export default function App() {
  return (
    <div className="relative flex h-[1395px] w-[2160px] flex-col overflow-hidden bg-black [font-family:'Liberation_Sans','Noto_Sans_CJK_SC',sans-serif]">
      <TopBar />
      <div className="flex min-h-0 flex-1">
        <div className="flex w-[1787px] shrink-0 flex-col">
          <Toolbar />
          <div className="relative">
            <Legend className="top-[3px]">
              <span className="ml-[4px]">狮头股份(日线)</span>
              <span className="ml-[9px]"><Drop /></span>
              <span className="ml-[7px]">只吃中间</span>
              <span className="ml-[7px] text-[#e6e600]">短线: 8.35</span>
              <span className="ml-[3px]"><Arrow /></span>
              <span className="ml-[12px] text-[#e000e0]">周线: 8.23</span>
              <span className="ml-[3px]"><Arrow up /></span>
              <span className="ml-[11px] text-[#20a020]">平衡线: 8.13</span>
              <span className="ml-[5px]"><Arrow up /></span>
              <span className="ml-[8px] text-[#e00000]">只吃中间: 0.00</span>
              <span className="ml-[4px]"><Arrow /></span>
            </Legend>
            <svg className="absolute left-[1660px] top-[7px]" width={16} height={18} viewBox="0 0 16 18">
              <path d="M8 1 L15 9 L8 17 L1 9 Z" fill="none" stroke="#808080" />
            </svg>
            <span className="absolute left-[1688px] top-[7px] flex h-[16px] w-[16px] justify-end rounded-[2px] border-2 border-[#808080] p-[1px]">
              <span className="h-full w-[5px] bg-[#808080]" />
            </span>
            <MainChart />
          </div>
          <div className="relative">
            <Legend className="top-0">
              <span className="ml-[3px]"><Drop /></span>
              <span className="ml-[7px]">只吃中间副</span>
              <span className="ml-[7px]">XG: 0.00</span>
              <span className="ml-[2px]"><Arrow /></span>
            </Legend>
            <SignalChart />
          </div>
          <div className="relative">
            <Legend className="top-[1px]">
              <span className="ml-[4px]"><Drop /></span>
              <span className="ml-[6px]">粘合必涨</span>
              <span className="ml-[8px] text-[#c8c800]">AD: 103598.02</span>
              <span className="ml-[2px]"><Arrow /></span>
              <span className="ml-[11px] text-[#d80000]">AZ: 10075.99</span>
              <span className="ml-[2px]"><Arrow /></span>
              <span className="ml-[11px] text-[#808080]">: 0.00</span>
            </Legend>
            <FlowChart />
          </div>
          <DateAxis />
          <TabRows />
        </div>
        <QuotePanel />
        <SideBar />
      </div>
      <StatusBar />
      <ImeBar />
      <Banner />
    </div>
  );
}
